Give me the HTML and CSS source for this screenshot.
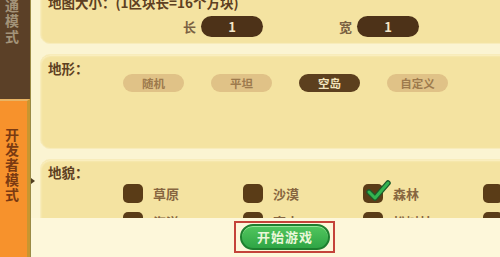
FILE: index.html
```html
<!DOCTYPE html>
<html lang="zh-CN">
<head>
<meta charset="utf-8">
<title>开发者模式</title>
<link rel="stylesheet" href="styles.css">
</head>
<body>
<div class="app">
  <aside class="sidebar">
    <div class="tab tab-normal"><span class="tab-text">普通模式</span></div>
    <div class="tab tab-dev"><span class="tab-text">开发者模式</span></div>
    <span class="tab-arrow"></span>
  </aside>
  <main class="main">
    <div class="scroll">
      <section class="card card-size">
        <div class="card-title">地图大小：(1区块长=16个方块)</div>
        <div class="size-row">
          <div class="size-field"><span class="size-label">长</span><span class="size-value">1</span></div>
          <div class="size-field"><span class="size-label">宽</span><span class="size-value">1</span></div>
        </div>
      </section>
      <section class="card card-terrain">
        <div class="card-title">地形：</div>
        <div class="tag-row">
          <span class="tag">随机</span>
          <span class="tag">平坦</span>
          <span class="tag tag-active">空岛</span>
          <span class="tag">自定义</span>
        </div>
      </section>
      <section class="card card-biome">
        <div class="card-title">地貌：</div>
        <div class="check-grid">
          <div class="check-item"><span class="box"></span><span class="check-label">草原</span></div>
          <div class="check-item"><span class="box"></span><span class="check-label">沙漠</span></div>
          <div class="check-item"><span class="box"><svg class="tick" width="28" height="22" viewBox="0 0 28 22"><polyline points="6,12 12,18 25,3" fill="none" stroke="#1d5a2a" stroke-width="5.5" stroke-linecap="round" stroke-linejoin="round"/><polyline points="6,12 12,18 25,3" fill="none" stroke="#33b350" stroke-width="3" stroke-linecap="round" stroke-linejoin="round"/></svg></span><span class="check-label">森林</span></div>
          <div class="check-item"><span class="box"></span><span class="check-label">雪原</span></div>
          <div class="check-item"><span class="box"></span><span class="check-label">海洋</span></div>
          <div class="check-item"><span class="box"></span><span class="check-label">高山</span></div>
          <div class="check-item"><span class="box"></span><span class="check-label">松树林</span></div>
          <div class="check-item"><span class="box"></span><span class="check-label">丛林</span></div>
        </div>
      </section>
    </div>
    <footer class="footer">
      <div class="highlight"><button class="start-btn">开始游戏</button></div>
    </footer>
  </main>
</div>
</body>
</html>
```

FILE: styles.css
```css
* { box-sizing: border-box; }
html, body {
  margin: 0;
  padding: 0;
  width: 500px;
  height: 257px;
  overflow: hidden;
  font-family: "Noto Sans CJK SC", "Noto Sans", sans-serif;
}
.app {
  display: flex;
  width: 500px;
  height: 257px;
  background: #fbf4d2;
}
.sidebar {
  position: relative;
  width: 31px;
  flex: none;
  display: flex;
  flex-direction: column;
  border-right: 1px solid #9a8a45;
}
.tab {
  overflow: hidden;
}
.tab-text {
  display: block;
  width: 14px;
  font-size: 14px;
  line-height: 15.5px;
  font-weight: 700;
}
.tab-normal {
  height: 99px;
  background: #5b4027;
  padding-left: 5px;
}
.tab-normal .tab-text {
  margin-top: -18px;
  color: #a39379;
}
.tab-dev {
  flex: 1;
  background: #f7922c;
  border-top: 2px solid #e9b464;
  border-right: 3px solid #c9962f;
  padding: 26px 0 0 5px;
}
.tab-dev .tab-text {
  color: #7a3a12;
  line-height: 15px;
}
.tab-arrow {
  position: absolute;
  right: -5px;
  top: 178px;
  width: 0;
  height: 0;
  border-left: 4px solid #4f3d20;
  border-top: 3.5px solid transparent;
  border-bottom: 3.5px solid transparent;
}
.main {
  flex: 1;
  min-width: 0;
  display: flex;
  flex-direction: column;
  overflow: hidden;
  background: #fbf4d2;
}
.scroll {
  flex: 1;
  min-height: 0;
  overflow: hidden;
  padding-left: 9px;
  display: flex;
  flex-direction: column;
  gap: 10px;
}
.card {
  flex: none;
  margin-right: -30px;
  background: #f4e3a1;
  border-radius: 10px;
  border: 1px solid #f8ecbb;
  box-shadow: inset 0 1px 2px rgba(255, 250, 220, 0.7);
  padding-left: 7px;
}
.card-title {
  font-size: 13.5px;
  font-weight: 700;
  line-height: 16px;
  color: #5e4022;
  white-space: nowrap;
}
.card-size {
  margin-top: -17px;
  padding-top: 9px;
  padding-bottom: 6px;
}
.card-size .card-title {
  line-height: 18px;
}
.size-row {
  display: flex;
  gap: 76px;
  margin-top: 5px;
  padding-left: 135px;
}
.size-field {
  display: flex;
  align-items: center;
  gap: 5px;
}
.size-label {
  font-size: 13px;
  font-weight: 700;
  color: #7a6142;
}
.size-value {
  width: 62px;
  height: 21px;
  border-radius: 11px;
  background: #4d3218;
  color: #f3e6c8;
  font-size: 13px;
  font-weight: 700;
  line-height: 21px;
  text-align: center;
}
.card-terrain {
  padding-top: 5px;
  padding-bottom: 56px;
}
.tag-row {
  display: flex;
  gap: 27px;
  margin-top: -2px;
  padding-left: 75px;
}
.tag {
  width: 61px;
  height: 18px;
  border-radius: 9px;
  background: #e0c287;
  color: #9d7a4d;
  font-size: 11.5px;
  font-weight: 700;
  line-height: 18px;
  text-align: center;
}
.tag-active {
  background: #5c3f1e;
  color: #f3e3bb;
}
.card-biome {
  padding-top: 4px;
  padding-bottom: 10px;
}
.check-grid {
  display: grid;
  grid-template-columns: repeat(4, 120px);
  row-gap: 9px;
  margin-top: 4px;
  padding-left: 75px;
}
.check-item {
  display: flex;
  align-items: center;
  height: 19px;
}
.box {
  position: relative;
  width: 20px;
  height: 19px;
  border-radius: 5px;
  background: #5a3c17;
  flex: none;
}
.tick {
  position: absolute;
  left: 0;
  top: -4px;
}
.check-label {
  margin-left: 10px;
  font-size: 13px;
  font-weight: 700;
  color: #876640;
  white-space: nowrap;
}
.footer {
  flex: none;
  height: 39px;
  background: #fdf7da;
  padding: 3px 0 0 203px;
  display: flex;
  align-items: flex-start;
}
.highlight {
  border: 2px solid #c4433a;
  padding: 1px 3px 1px 4px;
}
.start-btn {
  display: block;
  width: 90px;
  height: 26px;
  padding: 0;
  border-radius: 13px;
  border: 2px solid #1e7f2f;
  background: linear-gradient(#52c65e, #2fa545);
  box-shadow: inset 0 1px 0 rgba(200, 255, 200, 0.6);
  color: #eaf7d8;
  font-family: "Noto Sans CJK SC", "Noto Sans", sans-serif;
  font-size: 13px;
  font-weight: 700;
  letter-spacing: 1px;
  line-height: 20px;
  text-align: center;
}
```
